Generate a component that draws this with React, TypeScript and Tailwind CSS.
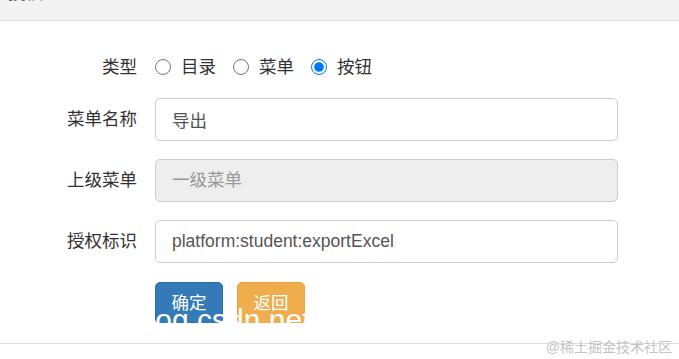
import React from "react";

const FONT = "font-['Liberation_Sans','Noto_Sans_CJK_SC',sans-serif]";

function Radio({ label, checked }: { label: string; checked?: boolean }) {
    return (
        <label className="flex items-center">
            <input
                type="radio"
                name="menuType"
                defaultChecked={checked}
                className="m-0 w-[16px] h-[16px] accent-[#0075ff]"
            />
            <span className="ml-[10px] mr-[17px] text-[17.5px] text-[#333] leading-[24px]">
                {label}
            </span>
        </label>
    );
}

function Field({
    label,
    value,
    placeholder,
    disabled,
}: {
    label: string;
    value?: string;
    placeholder?: string;
    disabled?: boolean;
}) {
    return (
        <div className="flex items-center mt-[18px] first:mt-0">
            <div className="w-[137px] text-right text-[17.5px] text-[#333]">{label}</div>
            <input
                readOnly
                disabled={disabled}
                defaultValue={value}
                placeholder={placeholder}
                className={
                    "ml-[18px] w-[463px] h-[43px] rounded-[5px] border border-[#ccc] px-[16px] text-[17.5px] text-[#555] placeholder:text-[#999] outline-none " +
                    (disabled ? "bg-[#eee]" : "bg-white")
                }
            />
        </div>
    );
}

export default function App() {
    return (
        <div className={`${FONT} relative w-[679px] h-[359px] bg-white overflow-hidden`}>
            {/* modal header, mostly scrolled off */}
            <div className="h-[21px] bg-[#f3f3f3] border-b border-[#ddd] overflow-hidden">
                <div className="pl-[8px] -mt-[19px] text-[17.5px] text-[#555] leading-[24px]">
                    授权
                </div>
            </div>

            {/* form body */}
            <div className="h-[302px] overflow-hidden pt-[34px]">
                <div className="flex items-center h-[24px]">
                    <div className="w-[137px] text-right text-[17.5px] text-[#333]">类型</div>
                    <div className="ml-[18px] flex items-center">
                        <Radio label="目录" />
                        <Radio label="菜单" />
                        <Radio label="按钮" checked />
                    </div>
                </div>

                <div className="mt-[19px] flex flex-col">
                    <Field label="菜单名称" value="导出" />
                    <Field label="上级菜单" placeholder="一级菜单" disabled />
                    <Field label="授权标识" value="platform:student:exportExcel" />
                </div>

                <div className="mt-[19px] ml-[155px] flex gap-[14px]">
                    <button className="w-[68px] h-[42px] rounded-[5px] bg-[#337ab7] border border-[#2e6da4] text-white text-[17.5px]">
                        确定
                    </button>
                    <button className="w-[68px] h-[42px] rounded-[5px] bg-[#f0ad4e] border border-[#eea236] text-white text-[17.5px]">
                        返回
                    </button>
                </div>
            </div>

            {/* white band + footer line */}
            <div className="h-[21px] border-b border-[#ddd]" />
            <div className="flex justify-end pr-[7px] -mt-[6px]">
                <span className="text-[14px] leading-[18px] text-[#c4c4c4]">@稀土掘金技术社区</span>
            </div>

            {/* white source watermark overlay */}
            <div className="absolute left-[132px] top-[302px] text-[30px] leading-[36px] text-white font-['Liberation_Sans',sans-serif] pointer-events-none whitespace-nowrap">
                blog.csdn.net
            </div>
        </div>
    );
}
